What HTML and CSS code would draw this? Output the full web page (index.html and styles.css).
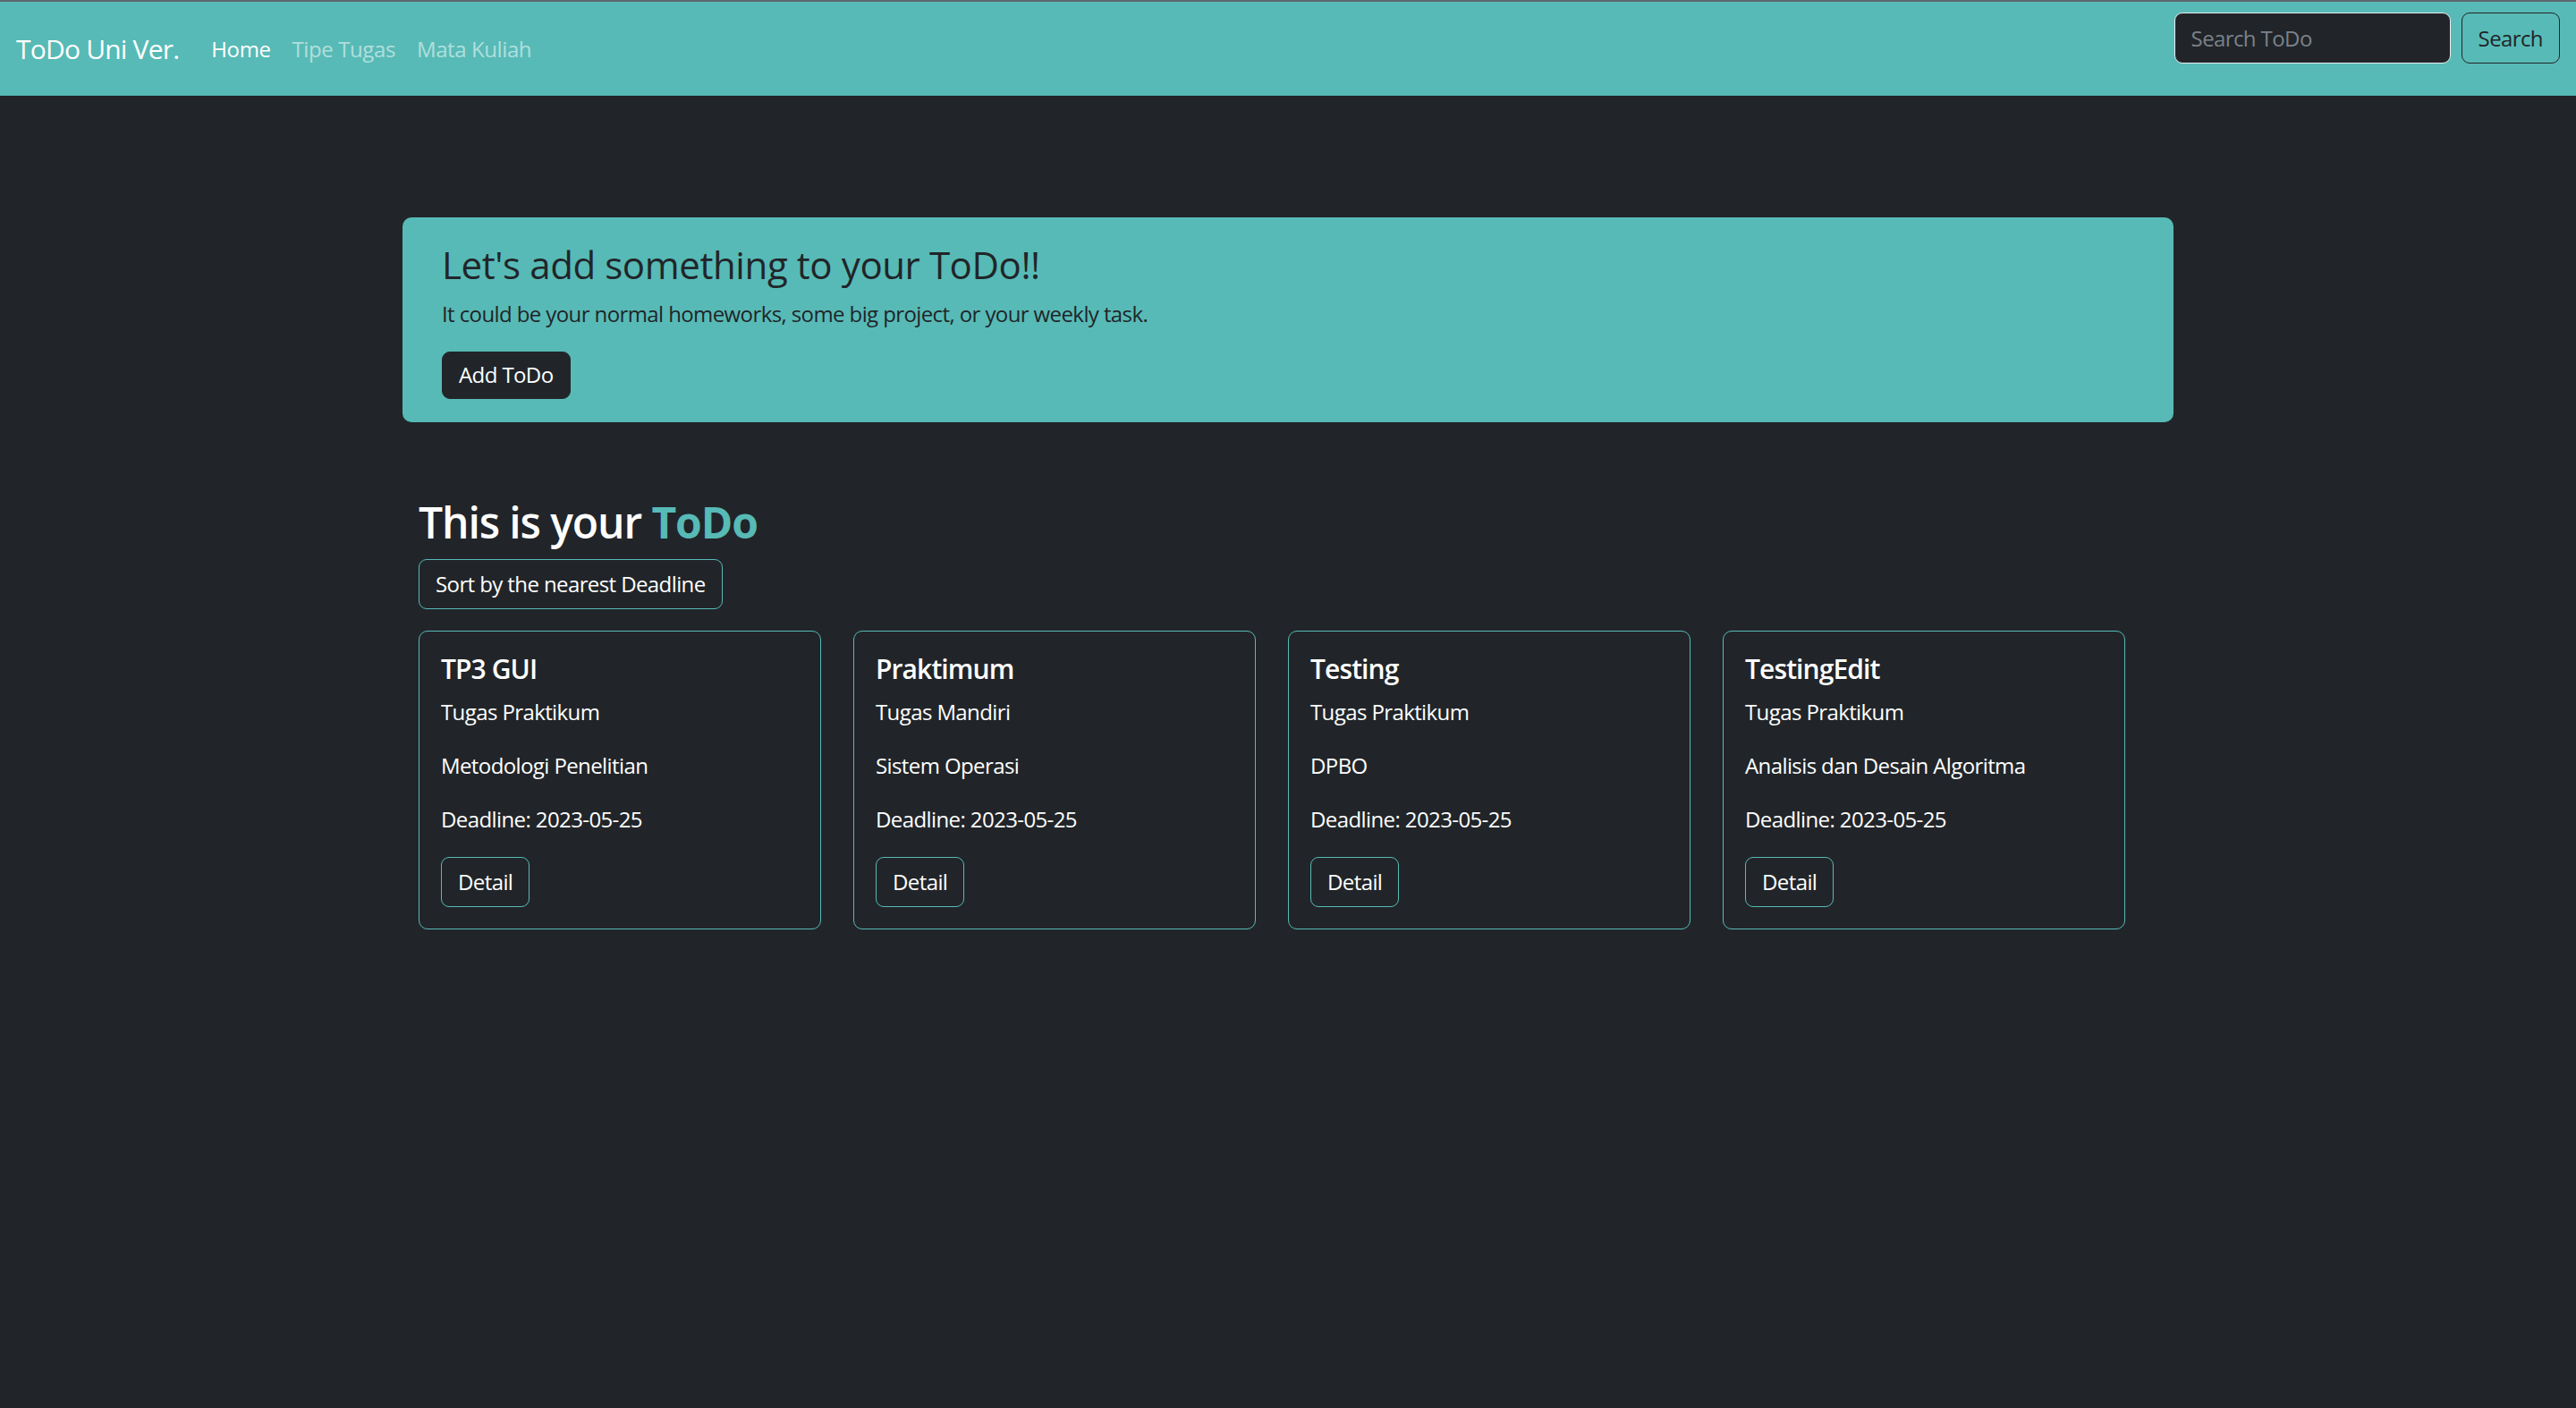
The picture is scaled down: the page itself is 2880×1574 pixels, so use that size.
FILE: index.html
```html
<!DOCTYPE html>
<html lang="en">
<head>
<meta charset="utf-8">
<title>ToDo Uni Ver.</title>
<link rel="stylesheet" href="styles.css">
</head>
<body>
<nav class="navbar">
  <div class="nav-inner">
    <a class="brand" href="#">ToDo Uni Ver.</a>
    <ul class="nav-links">
      <li><a class="nav-link active" href="#">Home</a></li>
      <li><a class="nav-link" href="#">Tipe Tugas</a></li>
      <li><a class="nav-link" href="#">Mata Kuliah</a></li>
    </ul>
    <form class="search">
      <input class="search-input" type="search" placeholder="Search ToDo">
      <button class="btn btn-outline-dark" type="button">Search</button>
    </form>
  </div>
</nav>

<main class="container">
  <section class="hero">
    <h3 class="hero-title">Let's add something to your ToDo!!</h3>
    <p class="hero-text">It could be your normal homeworks, some big project, or your weekly task.</p>
    <button class="btn btn-dark" type="button">Add ToDo</button>
  </section>

  <section class="todo">
    <h2 class="todo-title">This is your <b class="accent">ToDo</b></h2>
    <button class="btn btn-outline-teal" type="button">Sort by the nearest Deadline</button>

    <div class="cards">
      <div class="card">
        <h5 class="card-title">TP3 GUI</h5>
        <p class="card-text">Tugas Praktikum</p>
        <p class="card-text">Metodologi Penelitian</p>
        <p class="card-text">Deadline: 2023-05-25</p>
        <button class="btn btn-outline-teal" type="button">Detail</button>
      </div>
      <div class="card">
        <h5 class="card-title">Praktimum</h5>
        <p class="card-text">Tugas Mandiri</p>
        <p class="card-text">Sistem Operasi</p>
        <p class="card-text">Deadline: 2023-05-25</p>
        <button class="btn btn-outline-teal" type="button">Detail</button>
      </div>
      <div class="card">
        <h5 class="card-title">Testing</h5>
        <p class="card-text">Tugas Praktikum</p>
        <p class="card-text">DPBO</p>
        <p class="card-text">Deadline: 2023-05-25</p>
        <button class="btn btn-outline-teal" type="button">Detail</button>
      </div>
      <div class="card">
        <h5 class="card-title">TestingEdit</h5>
        <p class="card-text">Tugas Praktikum</p>
        <p class="card-text">Analisis dan Desain Algoritma</p>
        <p class="card-text">Deadline: 2023-05-25</p>
        <button class="btn btn-outline-teal" type="button">Detail</button>
      </div>
    </div>
  </section>
</main>
</body>
</html>
```

FILE: styles.css
```css
* { box-sizing: border-box; }

html, body {
  margin: 0;
  padding: 0;
}

body {
  background: #212529;
  color: #ffffff;
  font-family: "Open Sans", "Noto Sans", sans-serif;
  font-size: 24px;
  line-height: 1.5;
  letter-spacing: -0.6px;
  min-height: 1574px;
}

h2, h3, h5, p { margin: 0; }

/* ---------- navbar ---------- */
.navbar {
  background: #57bab6;
  border-top: 2px solid #5e6670;
  padding: 12px 18px;
}

.nav-inner {
  display: flex;
  align-items: center;
}

.brand {
  color: #ffffff;
  text-decoration: none;
  font-size: 30px;
  line-height: 45px;
  letter-spacing: -0.8px;
  padding: 7px 0;
  margin-right: 24px;
}

.nav-links {
  display: flex;
  list-style: none;
  margin: 0;
  padding: 0;
}

.nav-link {
  display: block;
  padding: 12px 12px;
  font-size: 24px;
  line-height: 36px;
  letter-spacing: -0.4px;
  color: rgba(255, 255, 255, 0.55);
  text-decoration: none;
}

.nav-link.active { color: #ffffff; }

.search {
  display: flex;
  gap: 12px;
  margin: 0 0 24px auto;
}

.search-input {
  width: 309px;
  height: 57px;
  padding: 9px 18px;
  font-family: inherit;
  font-size: 24px;
  line-height: 36px;
  letter-spacing: -0.6px;
  color: #ffffff;
  background: #212529;
  border: 1px solid #e9ecef;
  border-radius: 9px;
  outline: none;
}

.search-input::placeholder { color: #7b8189; }

/* ---------- buttons ---------- */
.btn {
  display: inline-block;
  font-family: inherit;
  font-size: 24px;
  line-height: 36px;
  letter-spacing: -0.6px;
  padding: 9px 18px;
  border-radius: 9px;
  border: 1px solid transparent;
  background: transparent;
  cursor: pointer;
}

.btn-outline-dark {
  color: #212529;
  border-color: #212529;
}

.btn-dark {
  color: #ffffff;
  background: #212529;
  border-color: #212529;
  padding: 7px 18px 8px;
}

.btn-outline-teal {
  color: #ffffff;
  border-color: #57bab6;
}

/* ---------- main ---------- */
.container {
  width: 1980px;
  margin: 0 auto;
}

.hero {
  margin-top: 136px;
  background: #57bab6;
  border-radius: 10px;
  padding: 28px 44px 26px;
  color: #212529;
}

.hero-title {
  font-size: 42px;
  line-height: 1.2;
  font-weight: 400;
  letter-spacing: -0.4px;
  margin-bottom: 12px;
}

.hero-text {
  font-size: 24px;
  line-height: 36px;
  margin-bottom: 24px;
}

.todo {
  margin-top: 83px;
  padding: 0 18px;
}

.todo-title {
  font-size: 48px;
  line-height: 1.2;
  font-weight: 600;
  letter-spacing: -1.1px;
  margin-bottom: 12px;
}

.accent {
  color: #57bab6;
  font-weight: 700;
}

.cards {
  display: grid;
  grid-template-columns: repeat(4, 450px);
  column-gap: 36px;
  margin-top: 24px;
}

.card {
  border: 1px solid #57bab6;
  border-radius: 10px;
  padding: 24px;
}

.card-title {
  font-size: 30px;
  line-height: 36px;
  font-weight: 600;
  letter-spacing: -0.9px;
  margin-bottom: 12px;
}

.card-text {
  font-size: 24px;
  line-height: 36px;
  margin-bottom: 24px;
}
```
